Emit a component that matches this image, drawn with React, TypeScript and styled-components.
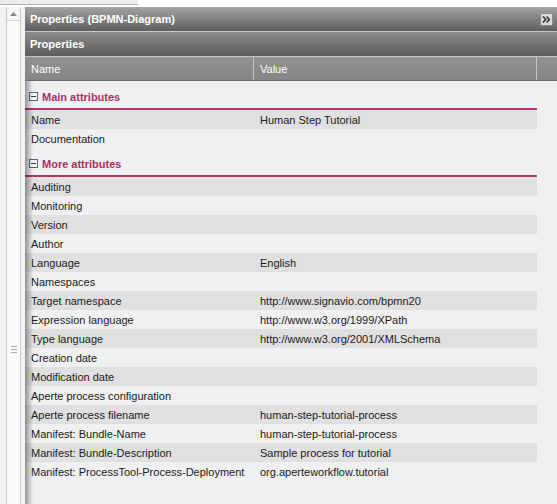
import React from "react";
import styled, { createGlobalStyle } from "styled-components";

const GlobalStyle = createGlobalStyle`
  html, body { margin: 0; padding: 0; background: #ffffff; }
  body { font-family: "Liberation Sans", Arial, sans-serif; font-size: 11px; color: #1a1a1a; }
  * { box-sizing: border-box; }
`;

const Page = styled.div`
  width: 557px;
  height: 504px;
  display: flex;
  flex-direction: column;
  overflow: hidden;
  background: #ffffff;
`;

const TopStrip = styled.div`
  height: 7px;
  display: flex;
  flex: none;
`;

const TopTab = styled.div`
  width: 138px;
  height: 5px;
  background: #ececec;
  border-bottom: 1px solid #b4b4b4;
`;

const Main = styled.div`
  flex: 1;
  display: flex;
  min-height: 0;
`;

const LeftRail = styled.div`
  width: 25px;
  flex: none;
  display: flex;
  background: #f3f3f3;
`;

const RailEdge = styled.div`
  width: 7px;
  border-right: 1px solid #c9c9c9;
  background: #f3f3f3;
`;

const ScrollTrack = styled.div`
  width: 14px;
  display: flex;
  flex-direction: column;
  background: #fafafa;
  border-right: 1px solid #c9c9c9;
`;

const ScrollButton = styled.div`
  height: 14px;
  display: flex;
  align-items: center;
  justify-content: center;
  border-bottom: 1px solid #d4d4d4;
  background: #f6f6f6;
`;

const ScrollGrip = styled.div`
  flex: 1;
  display: flex;
  justify-content: center;
  padding-top: 325px;
`;

const GripLines = styled.div`
  width: 6px;
  height: 7px;
  display: flex;
  flex-direction: column;
  justify-content: space-between;
  span {
    display: block;
    height: 1px;
    background: #a8a8a8;
  }
`;

const Panel = styled.div`
  flex: 1;
  display: flex;
  flex-direction: column;
  min-width: 0;
  background: #f0f0f0;
`;

const TitleBar = styled.div`
  height: 25px;
  flex: none;
  display: flex;
  align-items: center;
  justify-content: space-between;
  padding: 0 4px 0 5px;
  background: linear-gradient(#a4a4a4, #5e5e5e);
  border-bottom: 1px solid #c6c6c6;
  color: #ffffff;
  font-weight: bold;
  font-size: 11px;
`;

const SubBar = styled(TitleBar)`
  background: linear-gradient(#8e8e8e, #5c5c5c);
`;

const CollapseButton = styled.div`
  width: 13px;
  height: 13px;
  border: 1px solid #8a8a8a;
  border-radius: 2px;
  background: #dadada;
  display: flex;
  align-items: center;
  justify-content: center;
`;

const ColumnHeader = styled.div`
  height: 24px;
  flex: none;
  display: grid;
  grid-template-columns: 229px 283px 1fr;
  background: linear-gradient(#929292, #858585);
  border-bottom: 1px solid #6c6c6c;
  color: #ffffff;
`;

const HeaderCell = styled.div`
  display: flex;
  align-items: center;
  padding-left: 6px;
  border-right: 1px solid #c4c4c4;
  &:last-child { border-right: none; }
`;

const Body = styled.div`
  position: relative;
  flex: 1;
  min-height: 0;
  &::before {
    content: "";
    position: absolute;
    left: 0;
    top: 0;
    bottom: 0;
    width: 8px;
    background: linear-gradient(to right, rgba(0, 0, 0, 0.38), rgba(0, 0, 0, 0));
    pointer-events: none;
  }
`;

const Section = styled.div`
  width: 512px;
  height: 29px;
  display: flex;
  align-items: center;
  gap: 4px;
  padding: 4px 0 0 4px;
  border-bottom: 2px solid #b5386d;
  color: #a93264;
  font-weight: bold;
`;

const Toggle = styled.span`
  width: 9px;
  height: 9px;
  border: 1px solid #566a80;
  background: #f4f6fa;
  display: flex;
  align-items: center;
  justify-content: center;
  &::after {
    content: "";
    width: 5px;
    height: 1px;
    background: #2a3a50;
  }
`;

const Row = styled.div<{ $shaded: boolean }>`
  width: 512px;
  height: 19px;
  display: grid;
  grid-template-columns: 229px 283px;
  align-items: center;
  background: ${(p) => (p.$shaded ? "#e0e0e0" : "transparent")};
`;

const Cell = styled.div`
  padding-left: 6px;
  white-space: nowrap;
`;

const ValueCell = styled(Cell)``;

type Prop = [string, string];

const mainAttrs: Prop[] = [
  ["Name", "Human Step Tutorial"],
  ["Documentation", ""],
];

const moreAttrs: Prop[] = [
  ["Auditing", ""],
  ["Monitoring", ""],
  ["Version", ""],
  ["Author", ""],
  ["Language", "English"],
  ["Namespaces", ""],
  ["Target namespace", "http://www.signavio.com/bpmn20"],
  ["Expression language", "http://www.w3.org/1999/XPath"],
  ["Type language", "http://www.w3.org/2001/XMLSchema"],
  ["Creation date", ""],
  ["Modification date", ""],
  ["Aperte process configuration", ""],
  ["Aperte process filename", "human-step-tutorial-process"],
  ["Manifest: Bundle-Name", "human-step-tutorial-process"],
  ["Manifest: Bundle-Description", "Sample process for tutorial"],
  ["Manifest: ProcessTool-Process-Deployment", "org.aperteworkflow.tutorial"],
];

const Rows = ({ items }: { items: Prop[] }) => (
  <>
    {items.map(([name, value], i) => (
      <Row key={name} $shaded={i % 2 === 0}>
        <Cell>{name}</Cell>
        <ValueCell>{value}</ValueCell>
      </Row>
    ))}
  </>
);

export default function App() {
  return (
    <Page>
      <GlobalStyle />
      <TopStrip>
        <TopTab />
      </TopStrip>
      <Main>
        <LeftRail>
          <RailEdge />
          <ScrollTrack>
            <ScrollButton>
              <svg width="7" height="4" viewBox="0 0 7 4">
                <path d="M0 4 L3.5 0 L7 4 Z" fill="#8a8a8a" />
              </svg>
            </ScrollButton>
            <ScrollGrip>
              <GripLines>
                <span />
                <span />
                <span />
              </GripLines>
            </ScrollGrip>
          </ScrollTrack>
        </LeftRail>
        <Panel>
          <TitleBar>
            <span>Properties (BPMN-Diagram)</span>
            <CollapseButton>
              <svg width="9" height="7" viewBox="0 0 9 7">
                <path d="M1 0.5 L3.8 3.5 L1 6.5 M4.6 0.5 L7.4 3.5 L4.6 6.5" fill="none" stroke="#222" strokeWidth="1.4" />
              </svg>
            </CollapseButton>
          </TitleBar>
          <SubBar>
            <span>Properties</span>
          </SubBar>
          <ColumnHeader>
            <HeaderCell>Name</HeaderCell>
            <HeaderCell>Value</HeaderCell>
            <HeaderCell />
          </ColumnHeader>
          <Body>
            <Section>
              <Toggle />
              Main attributes
            </Section>
            <Rows items={mainAttrs} />
            <Section>
              <Toggle />
              More attributes
            </Section>
            <Rows items={moreAttrs} />
          </Body>
        </Panel>
      </Main>
    </Page>
  );
}
